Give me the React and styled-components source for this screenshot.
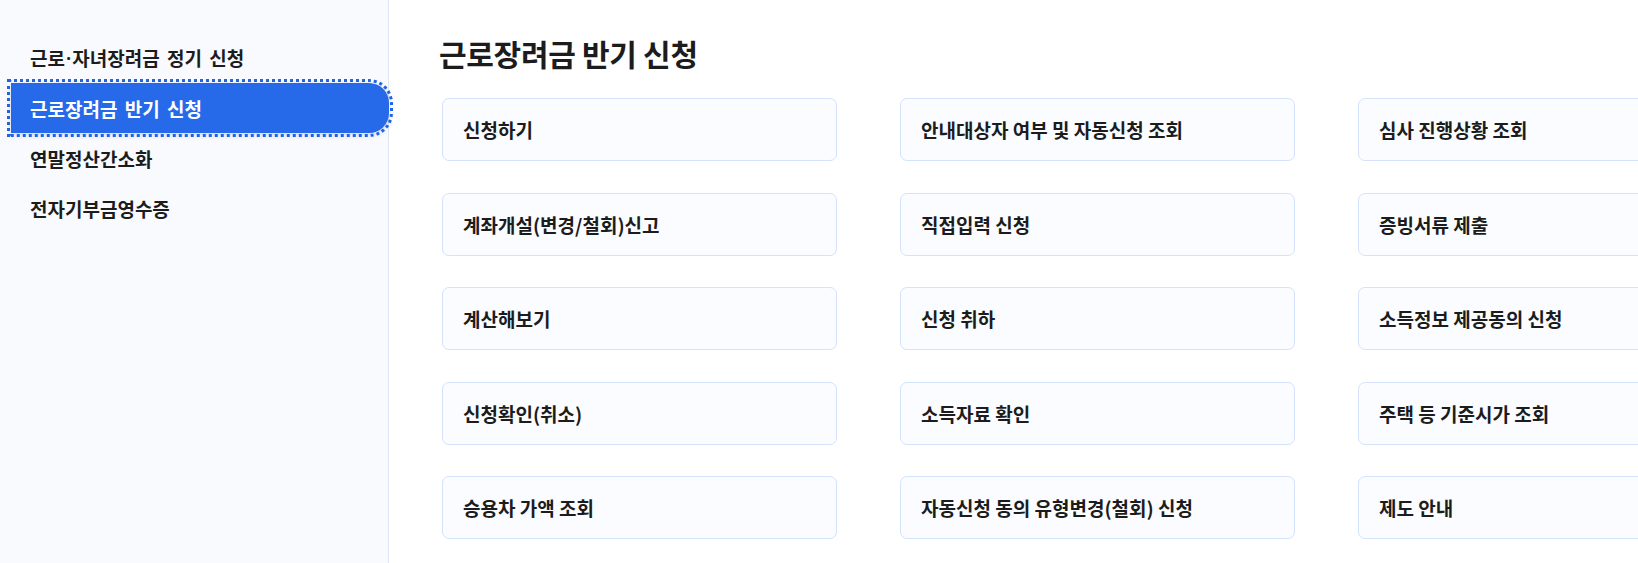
import React from "react";
import styled, { createGlobalStyle } from "styled-components";

const GlobalStyle = createGlobalStyle`
  html, body {
    margin: 0;
    padding: 0;
    overflow: hidden;
    background: #fff;
  }
  body {
    font-family: "Noto Sans CJK KR", "Noto Sans", sans-serif;
    color: #1c1c1c;
  }
`;

const Layout = styled.div`
  display: flex;
  min-height: 563px;
  width: 1900px;
`;

const Sidebar = styled.nav`
  flex: 0 0 389px;
  background: #f8fafe;
  border-right: 1px solid #dde5f3;
  padding: 33px 0 0 11px;
  box-sizing: border-box;
`;

const MenuList = styled.ul`
  list-style: none;
  margin: 0;
  padding: 0;
`;

const MenuItem = styled.li`
  height: 50px;
  display: flex;
  align-items: center;
  padding-left: 19px;
  margin-right: ${(p) => (p.active ? "-1px" : "0")};
  font-size: 19px;
  font-weight: 600;
  word-spacing: 3px;
  white-space: pre;
  color: ${(p) => (p.active ? "#fff" : "#1c1c1c")};
  background: ${(p) => (p.active ? "#266ae9" : "transparent")};
  border-radius: ${(p) => (p.active ? "0 20px 20px 0" : "0")};
  box-shadow: ${(p) => (p.active ? "0 2px 6px rgba(0, 0, 0, 0.15)" : "none")};
  outline: ${(p) => (p.active ? "3px dotted #1f63e6" : "none")};
  outline-offset: 1px;
  cursor: pointer;
`;

const Dot = styled.span`
  font-family: "Noto Sans", sans-serif;
  margin: 0 1px;
`;

const Main = styled.main`
  flex: 1;
  padding: 34px 0 0 53px;
`;

const Title = styled.h2`
  margin: 0 0 25px -3px;
  font-size: 30px;
  line-height: 39px;
  font-weight: 700;
  letter-spacing: -0.3px;
  color: #1c1c1c;
`;

const CardGrid = styled.div`
  display: grid;
  grid-template-columns: repeat(3, 395px);
  grid-auto-rows: 63px;
  column-gap: 63px;
  row-gap: 31.5px;
`;

const Card = styled.a`
  display: flex;
  align-items: center;
  box-sizing: border-box;
  padding-left: 20px;
  background: #fbfcff;
  border: 1px solid #d4e2fb;
  border-radius: 7px;
  font-size: 19px;
  font-weight: 600;
  color: #1c1c1c;
  text-decoration: none;
  cursor: pointer;
`;

const menus = [
  ["근로", "자녀장려금 정기 신청"],
  ["근로장려금 반기 신청"],
  ["연말정산간소화"],
  ["전자기부금영수증"],
];

const cards = [
  "신청하기",
  "안내대상자 여부 및 자동신청 조회",
  "심사 진행상황 조회",
  "계좌개설(변경/철회)신고",
  "직접입력 신청",
  "증빙서류 제출",
  "계산해보기",
  "신청 취하",
  "소득정보 제공동의 신청",
  "신청확인(취소)",
  "소득자료 확인",
  "주택 등 기준시가 조회",
  "승용차 가액 조회",
  "자동신청 동의 유형변경(철회) 신청",
  "제도 안내",
];

export default function App() {
  return (
    <>
      <GlobalStyle />
      <Layout>
        <Sidebar>
          <MenuList>
            {menus.map((parts, i) => (
              <MenuItem key={i} active={i === 1}>
                {parts.length > 1 ? (
                  <span>
                    {parts[0]}
                    <Dot>·</Dot>
                    {parts[1]}
                  </span>
                ) : (
                  parts[0]
                )}
              </MenuItem>
            ))}
          </MenuList>
        </Sidebar>
        <Main>
          <Title>근로장려금 반기 신청</Title>
          <CardGrid>
            {cards.map((c, i) => (
              <Card key={i}>{c}</Card>
            ))}
          </CardGrid>
        </Main>
      </Layout>
    </>
  );
}
